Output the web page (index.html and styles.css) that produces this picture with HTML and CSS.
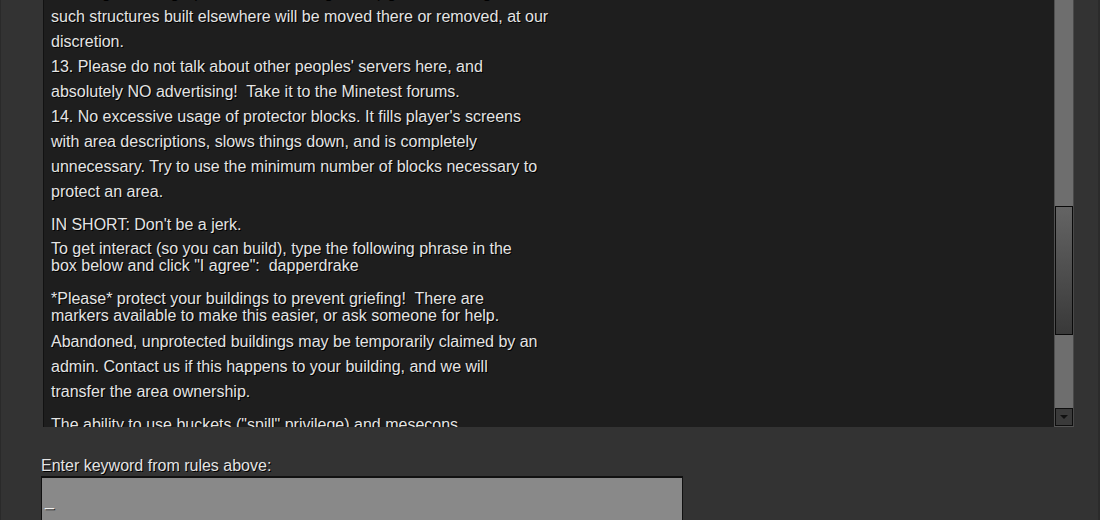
FILE: index.html
```html
<!DOCTYPE html>
<html>
<head>
<meta charset="utf-8">
<link rel="stylesheet" href="styles.css">
</head>
<body>
<div class="frame">
  <div class="panel">
    <div class="textarea">
      <div class="content">
        <div class="block lh25">
          <div>12. Large buildings (castles, towers, big farms) go in the designated zone;</div>
          <div>such structures built elsewhere will be moved there or removed, at our</div>
          <div>discretion.</div>
          <div>13. Please do not talk about other peoples' servers here, and</div>
          <div>absolutely NO advertising!&nbsp; Take it to the Minetest forums.</div>
          <div>14. No excessive usage of protector blocks. It fills player's screens</div>
          <div>with area descriptions, slows things down, and is completely</div>
          <div>unnecessary. Try to use the minimum number of blocks necessary to</div>
          <div>protect an area.</div>
        </div>
        <div class="block lh25 short">IN SHORT: Don't be a jerk.</div>
        <div class="block lh17 interact">
          <div>To get interact (so you can build), type the following phrase in the</div>
          <div>box below and click "I agree":&nbsp; dapperdrake</div>
        </div>
        <div class="block lh17 please">
          <div>*Please* protect your buildings to prevent griefing!&nbsp; There are</div>
          <div>markers available to make this easier, or ask someone for help.</div>
        </div>
        <div class="block lh25 abandoned">
          <div>Abandoned, unprotected buildings may be temporarily claimed by an</div>
          <div>admin. Contact us if this happens to your building, and we will</div>
          <div>transfer the area ownership.</div>
        </div>
        <div class="block lh25 ability">
          <div>The ability to use buckets ("spill" privilege) and mesecons</div>
          <div>requires a separate request to an admin.</div>
        </div>
      </div>
    </div>
    <div class="scrollbar">
      <div class="thumb" style="margin-top: 206px; height: 129px;"></div>
      <div class="track-fill"></div>
      <div class="down-btn"><span class="arrow"></span></div>
    </div>
  </div>
  <div class="label">Enter keyword from rules above:</div>
  <div class="input"><span class="cursor">_</span></div>
</div>
</body>
</html>
```

FILE: styles.css
```css
html, body {
  margin: 0;
  padding: 0;
  background: #333333;
  overflow: hidden;
}

.frame {
  width: 1100px;
  height: 520px;
  box-sizing: border-box;
  border-left: 1px solid #2a2a2a;
  border-right: 2px solid #2b2b2b;
  padding-left: 42px;
  font-family: "Liberation Sans", Arial, sans-serif;
  font-size: 16px;
  color: #e4e4e4;
}

.panel {
  display: flex;
  height: 427px;
  width: 1031px;
}

.textarea {
  flex: 1;
  background: #1e1e1e;
  border-left: 1px solid #121212;
  overflow: hidden;
  padding-left: 7px;
}

.content {
  margin-top: -21px;
  text-shadow: 1px 1px 0 #000;
  white-space: nowrap;
}

.lh25 { line-height: 25px; }
.lh17 { line-height: 17px; }

.short { margin-top: 8px; }
.interact { margin-top: 3px; }
.please { margin-top: 16px; }
.abandoned { margin-top: 5px; }
.ability { margin-top: 8px; }

.scrollbar {
  width: 20px;
  background: #6e6e6e;
  border-left: 1px solid #505050;
  border-right: 1px solid #4a4a4a;
  border-bottom: 1px solid #555555;
  display: flex;
  flex-direction: column;
  box-sizing: border-box;
}

.thumb {
  width: 18px;
  box-sizing: border-box;
  border: 1px solid #0a0a0a;
  background: linear-gradient(#646464, #393939);
}

.track-fill {
  flex: 1;
}

.down-btn {
  height: 18px;
  width: 18px;
  box-sizing: border-box;
  border: 1px solid #0e0e0e;
  background: #3a3a3a;
  display: flex;
  align-items: center;
  justify-content: center;
}

.arrow {
  width: 0;
  height: 0;
  border-left: 4px solid transparent;
  border-right: 4px solid transparent;
  border-top: 4px solid #111;
}

.label {
  margin-top: 30px;
  margin-left: -2px;
  line-height: 18px;
  text-shadow: 1px 1px 0 #000;
  white-space: nowrap;
}

.input {
  margin-top: 1px;
  margin-left: -2px;
  width: 642px;
  height: 70px;
  box-sizing: border-box;
  background: #898989;
  border: 1px solid #111;
  border-top-width: 2px;
  padding-left: 3px;
  padding-top: 14px;
  line-height: 18px;
  color: #f0f0f0;
}

.cursor {
  text-shadow: 1px 1px 0 #222;
}
```
